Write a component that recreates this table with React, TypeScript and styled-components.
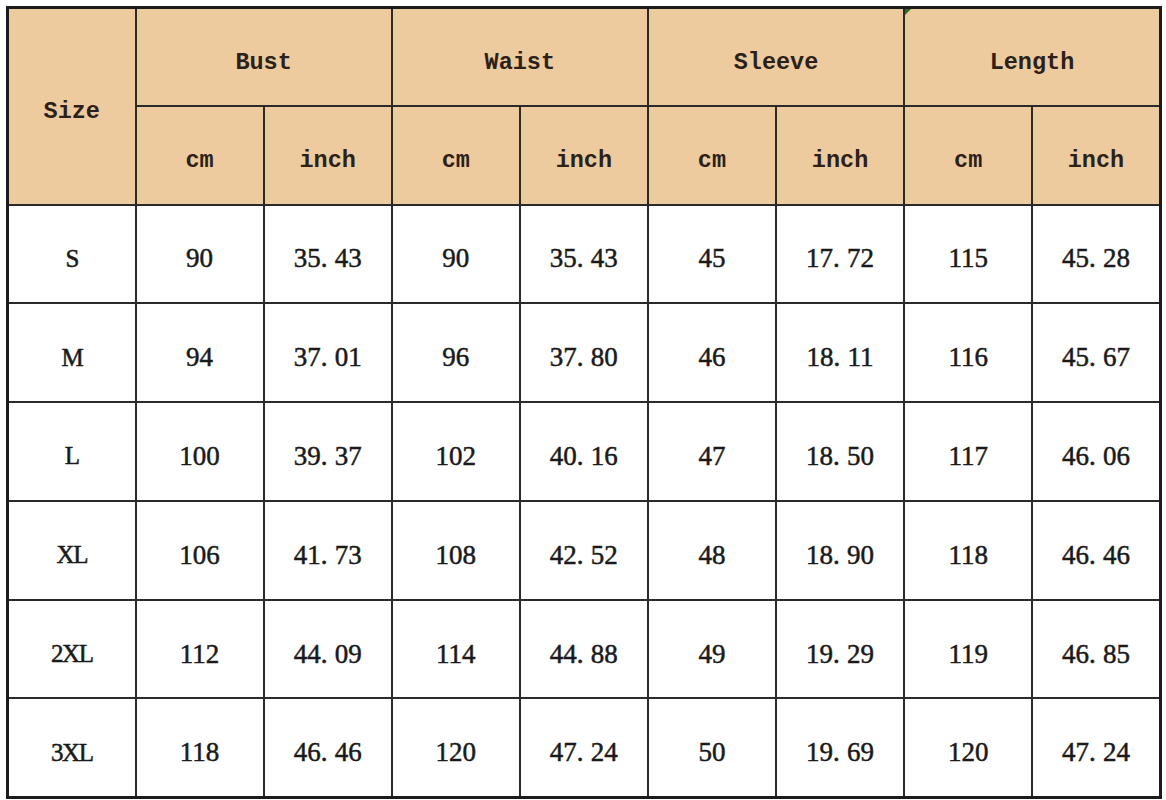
import React from "react";
import styled, { createGlobalStyle } from "styled-components";

const Global = createGlobalStyle`
  html, body { margin: 0; padding: 0; background: #ffffff; }
  body { font-family: "Liberation Serif", serif; }
`;

const Page = styled.div`
  width: 1166px;
  height: 800px;
  padding: 6px 0 0 6px;
  box-sizing: border-box;
  background: #ffffff;
`;

const Table = styled.table`
  border-collapse: collapse;
  table-layout: fixed;
  width: 1153px;
  border: 3px solid #1c1c1c;
`;

const HeadCell = styled.th<{ $tall?: boolean }>`
  position: relative;
  background: #edcb9f;
  border: 2px solid #2a2a2a;
  height: ${(p) => (p.$tall ? 197 : 98)}px;
  padding: 10px 0 0 0;
  box-sizing: border-box;
  font-family: "Liberation Mono", "Courier New", monospace;
  font-weight: 700;
  font-size: 23.5px;
  color: #2b2118;
  text-align: center;
  vertical-align: middle;
`;

const Marker = styled.span`
  position: absolute;
  left: 0;
  top: 0;
  width: 0;
  height: 0;
  border-top: 6px solid #2f6b1f;
  border-right: 6px solid transparent;
`;

const Cell = styled.td<{ $size?: boolean }>`
  border: 2px solid #2a2a2a;
  height: 98.8px;
  padding: 10px 0 0 0;
  box-sizing: border-box;
  text-align: center;
  vertical-align: middle;
  font-family: "Liberation Serif", "Times New Roman", serif;
  font-size: ${(p) => (p.$size ? 25 : 27)}px;
  letter-spacing: ${(p) => (p.$size ? "-1.5px" : "0")};
  font-weight: 400;
  -webkit-text-stroke: 0.5px #1a1a1a;
  color: #1a1a1a;
`;

const Dot = styled.span`
  display: inline-block;
  width: 14px;
  text-align: left;
`;

const Num: React.FC<{ v: string }> = ({ v }) => {
  const [a, b] = v.split(".");
  if (b === undefined) return <>{a}</>;
  return (
    <>
      {a}
      <Dot>.</Dot>
      {b}
    </>
  );
};

const rows: string[][] = [
  ["S", "90", "35.43", "90", "35.43", "45", "17.72", "115", "45.28"],
  ["M", "94", "37.01", "96", "37.80", "46", "18.11", "116", "45.67"],
  ["L", "100", "39.37", "102", "40.16", "47", "18.50", "117", "46.06"],
  ["XL", "106", "41.73", "108", "42.52", "48", "18.90", "118", "46.46"],
  ["2XL", "112", "44.09", "114", "44.88", "49", "19.29", "119", "46.85"],
  ["3XL", "118", "46.46", "120", "47.24", "50", "19.69", "120", "47.24"],
];

const groups = ["Bust", "Waist", "Sleeve", "Length"];

export default function App() {
  return (
    <Page>
      <Global />
      <Table>
        <colgroup>
          <col style={{ width: "128px" }} />
          {Array.from({ length: 8 }).map((_, i) => (
            <col key={i} style={{ width: "128.1px" }} />
          ))}
        </colgroup>
        <thead>
          <tr>
            <HeadCell rowSpan={2} $tall>
              Size
            </HeadCell>
            {groups.map((g) => (
              <HeadCell key={g} colSpan={2}>
                {g === "Length" && <Marker />}
                {g}
              </HeadCell>
            ))}
          </tr>
          <tr>
            {groups.map((g) => (
              <React.Fragment key={g}>
                <HeadCell>cm</HeadCell>
                <HeadCell>inch</HeadCell>
              </React.Fragment>
            ))}
          </tr>
        </thead>
        <tbody>
          {rows.map((r) => (
            <tr key={r[0]}>
              {r.map((v, i) => (
                <Cell key={i} $size={i === 0}>
                  {i === 0 ? v : <Num v={v} />}
                </Cell>
              ))}
            </tr>
          ))}
        </tbody>
      </Table>
    </Page>
  );
}
